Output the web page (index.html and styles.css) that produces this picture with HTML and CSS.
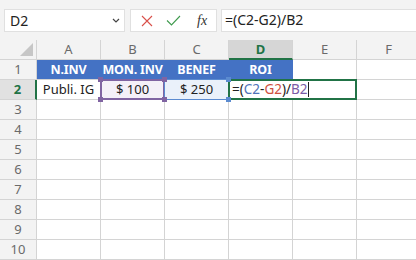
FILE: index.html
```html
<!DOCTYPE html>
<html lang="en">
<head>
    <meta charset="utf-8">
    <title>Hoja de cálculo</title>
    <link rel="stylesheet" href="styles.css">
</head>
<body>

<!-- Formula Bar -->
<div class="formula-bar">
    <div class="name-box">
        <span>D2</span>
        <svg class="chevron" width="8" height="5" viewBox="0 0 8 5"><path d="M1 1 L4 4 L7 1" fill="none" stroke="#444" stroke-width="1.2"/></svg>
    </div>
    <div class="fx-buttons">
        <svg width="12" height="12" viewBox="0 0 12 12"><path d="M1 1 L11 11 M11 1 L1 11" stroke="#d9504a" stroke-width="1.1"/></svg>
        <svg width="15" height="11" viewBox="0 0 15 11"><path d="M1 5.5 L5.5 10 L14 1" fill="none" stroke="#3f9a4e" stroke-width="1.1"/></svg>
        <span class="fx">fx</span>
    </div>
    <div class="formula-input">=(C2-G2)/B2</div>
</div>

<!-- Sheet -->
<div class="sheet">
    <div class="corner"><span class="select-all"></span></div>
    <div class="col-head">A</div>
    <div class="col-head">B</div>
    <div class="col-head">C</div>
    <div class="col-head active">D</div>
    <div class="col-head">E</div>
    <div class="col-head">F</div>

    <div class="row-head">1</div>
    <div class="cell title">N.INV</div>
    <div class="cell title">MON. INV</div>
    <div class="cell title">BENEF</div>
    <div class="cell title">ROI</div>
    <div class="cell"></div>
    <div class="cell"></div>

    <div class="row-head active">2</div>
    <div class="cell">Publi. IG</div>
    <div class="cell ref ref-purple">$ 100
        <i class="handle tl"></i><i class="handle tr"></i><i class="handle bl"></i><i class="handle br"></i>
    </div>
    <div class="cell ref ref-blue">$ 250
        <i class="handle tr"></i><i class="handle br"></i>
    </div>
    <div class="cell editing">=(<span class="c-blue">C2</span>-<span class="c-red">G2</span>)/<span class="c-purple">B2</span><span class="caret"></span></div>
    <div class="cell"></div>

    <div class="row-head">3</div>
    <div class="cell"></div><div class="cell"></div><div class="cell"></div><div class="cell"></div><div class="cell"></div><div class="cell"></div>
    <div class="row-head">4</div>
    <div class="cell"></div><div class="cell"></div><div class="cell"></div><div class="cell"></div><div class="cell"></div><div class="cell"></div>
    <div class="row-head">5</div>
    <div class="cell"></div><div class="cell"></div><div class="cell"></div><div class="cell"></div><div class="cell"></div><div class="cell"></div>
    <div class="row-head">6</div>
    <div class="cell"></div><div class="cell"></div><div class="cell"></div><div class="cell"></div><div class="cell"></div><div class="cell"></div>
    <div class="row-head">7</div>
    <div class="cell"></div><div class="cell"></div><div class="cell"></div><div class="cell"></div><div class="cell"></div><div class="cell"></div>
    <div class="row-head">8</div>
    <div class="cell"></div><div class="cell"></div><div class="cell"></div><div class="cell"></div><div class="cell"></div><div class="cell"></div>
    <div class="row-head">9</div>
    <div class="cell"></div><div class="cell"></div><div class="cell"></div><div class="cell"></div><div class="cell"></div><div class="cell"></div>
    <div class="row-head">10</div>
    <div class="cell"></div><div class="cell"></div><div class="cell"></div><div class="cell"></div><div class="cell"></div><div class="cell"></div>
</div>

</body>
</html>
```

FILE: styles.css
```css
/* General Layout */
* {
    box-sizing: border-box;
}

body {
    margin: 0;
    background: #f3f3f3;
    font-family: 'Noto Sans', 'Open Sans', sans-serif;
    color: #222;
    overflow: hidden;
}

/* Formula Bar */
.formula-bar {
    display: flex;
    height: 23px;
    margin-top: 9px;
    padding-left: 4px;
}

.name-box {
    width: 121px;
    display: flex;
    align-items: center;
    justify-content: space-between;
    padding: 0 4px 0 5px;
    background: white;
    border: 1px solid #e0e0e0;
    font-size: 14px;
}

.fx-buttons {
    width: 87px;
    margin-left: 5px;
    display: flex;
    align-items: center;
    gap: 13px;
    padding-left: 10px;
    background: white;
    border: 1px solid #e0e0e0;
}

.fx {
    font-family: 'Liberation Serif', serif;
    font-style: italic;
    font-size: 14px;
    color: #333;
    margin-left: 3px;
}

.formula-input {
    flex: 1;
    margin-left: 4px;
    padding-left: 3px;
    background: white;
    border: 1px solid #e0e0e0;
    border-right: none;
    font-size: 14px;
    line-height: 20px;
}

/* Sheet Grid */
.sheet {
    margin-top: 8px;
    display: grid;
    grid-template-columns: 37px repeat(6, 64px);
    grid-auto-rows: 20px;
    background: white;
}

.corner,
.col-head,
.row-head {
    background: #f3f3f3;
    color: #6a6a6a;
    font-size: 13px;
    text-align: center;
    line-height: 19px;
    border-right: 1px solid #d4d4d4;
    border-bottom: 1px solid #d4d4d4;
}

.corner {
    position: relative;
}

.select-all {
    position: absolute;
    right: 3px;
    bottom: 3px;
    width: 0;
    height: 0;
    border-left: 13px solid transparent;
    border-bottom: 13px solid #c6c6c6;
}

.col-head.active {
    background: #d6d6d6;
    color: #217346;
    font-weight: bold;
    border-bottom: 2px solid #217346;
}

.row-head.active {
    background: #e1e1e1;
    color: #217346;
    font-weight: bold;
    border-right: 2px solid #217346;
}

.cell {
    position: relative;
    font-size: 13px;
    text-align: center;
    line-height: 19px;
    border-right: 1px solid #d4d4d4;
    border-bottom: 1px solid #d4d4d4;
    white-space: nowrap;
}

.cell.title {
    background: #4472c4;
    color: white;
    font-size: 12.5px;
    font-weight: bold;
    letter-spacing: -0.2px;
    border-right-color: #4472c4;
}

/* Formula references */
.ref::after {
    content: "";
    position: absolute;
    inset: -1px;
    border: 2px solid;
    pointer-events: none;
}

.ref-purple {
    background: #f4f0f8;
}

.ref-purple::after {
    border-color: #8064a2;
}

.ref-blue {
    background: #eaf1fa;
}

.ref-blue::after {
    border: 1px solid #5b8bd0;
}

.handle {
    position: absolute;
    width: 5px;
    height: 5px;
    z-index: 2;
}

.ref-purple .handle {
    background: #8064a2;
}

.ref-blue .handle {
    background: #5b8bd0;
}

.handle.tl { top: -3px; left: -3px; }
.handle.tr { top: -3px; right: -3px; }
.handle.bl { bottom: -3px; left: -3px; }
.handle.br { bottom: -3px; right: -3px; }

/* Cell in edit mode */
.editing {
    grid-column: span 2;
    text-align: left;
    padding-left: 3px;
    font-size: 13.5px;
}

.editing::after {
    content: "";
    position: absolute;
    inset: -1px;
    border: 2px solid #217346;
}

.c-blue { color: #4f73b8; }
.c-red { color: #d0513f; }
.c-purple { color: #7b5ba6; }

.caret {
    display: inline-block;
    width: 1px;
    height: 15px;
    background: #222;
    vertical-align: -3px;
}
```
